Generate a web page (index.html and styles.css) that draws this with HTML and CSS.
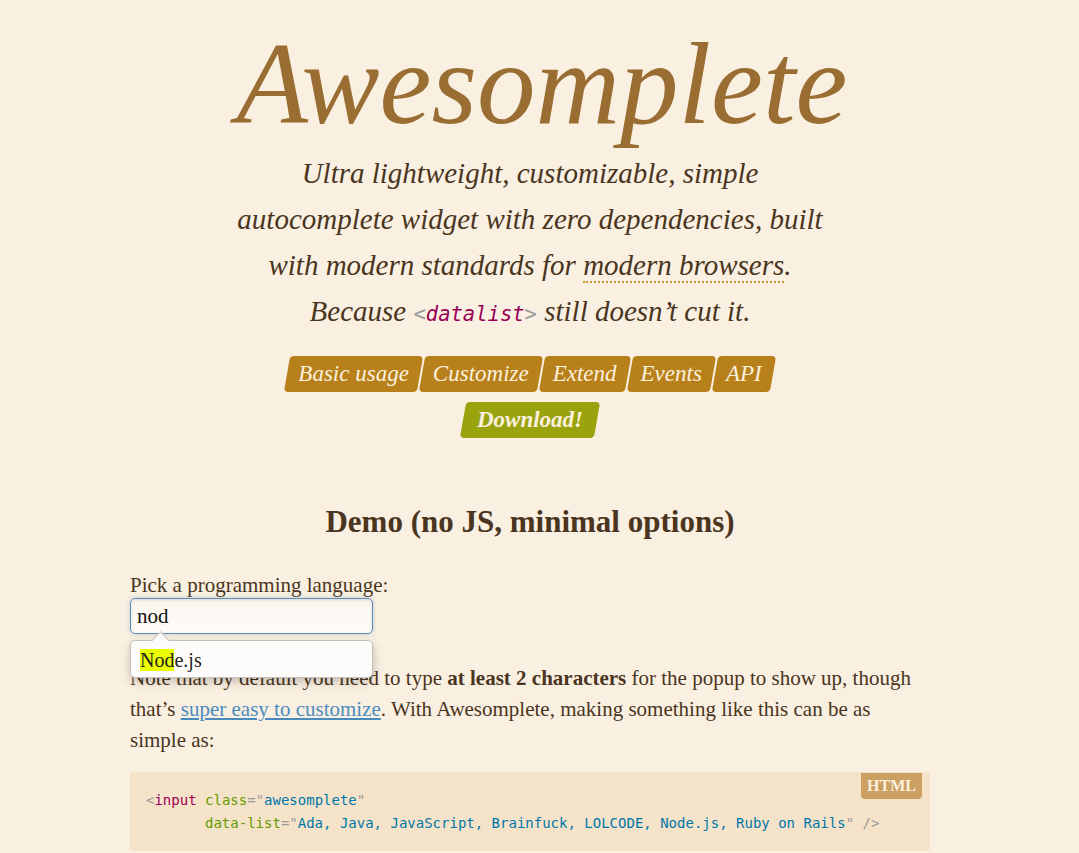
FILE: index.html
```html
<!DOCTYPE html>
<html>
<head>
<meta charset="utf-8">
<title>Awesomplete</title>
<link rel="stylesheet" href="styles.css">
</head>
<body>
<div class="page">
  <header class="hero">
    <h1 class="title">Awesomplete</h1>
    <p class="tagline">Ultra lightweight, customizable, simple<br>autocomplete widget with zero dependencies, built<br>with modern standards for <abbr class="dotted">modern browsers</abbr>.<br>Because <code class="tag"><span class="punct">&lt;</span>datalist<span class="punct">&gt;</span></code> still doesn’t cut it.</p>
    <nav class="nav">
      <div class="nav-row">
        <a class="btn">Basic usage</a><a class="btn">Customize</a><a class="btn">Extend</a><a class="btn">Events</a><a class="btn">API</a>
      </div>
      <div class="nav-row">
        <a class="btn btn-download">Download!</a>
      </div>
    </nav>
  </header>

  <section class="demo">
    <h2 class="demo-title">Demo (no JS, minimal options)</h2>
    <label class="field-label">Pick a programming language:</label>
    <div class="awesomplete">
      <div class="input">nod</div>
      <ul class="suggestions">
        <li><mark>Nod</mark>e.js</li>
      </ul>
    </div>
    <p class="text">Note that by default you need to type <strong>at least 2 characters</strong> for the popup to show up, though that’s <a class="link">super easy to customize</a>. With Awesomplete, making something like this can be as simple as:</p>
    <div class="code">
      <span class="lang">HTML</span>
<pre><span class="punct">&lt;</span><span class="t">input</span> <span class="a">class</span><span class="punct">=</span><span class="v"><span class="punct">"</span>awesomplete<span class="punct">"</span></span>
       <span class="a">data-list</span><span class="punct">=</span><span class="v"><span class="punct">"</span>Ada, Java, JavaScript, Brainfuck, LOLCODE, Node.js, Ruby on Rails<span class="punct">"</span></span> <span class="punct">/&gt;</span></pre>
    </div>
  </section>
</div>
</body>
</html>
```
FILE: styles.css
```css
html, body {
  margin: 0;
  padding: 0;
  background: #faf0e2;
}
body {
  padding-right: 19px;
  font-family: "Liberation Serif", "Times New Roman", serif;
  color: #4a3520;
}
.page {
  width: 800px;
  margin: 0 auto;
}
.hero {
  text-align: center;
  padding-top: 14px;
}
.title {
  margin: 0;
  padding-left: 24px;
  font-size: 117px;
  font-weight: normal;
  font-style: italic;
  color: #9a6e33;
  line-height: 140px;
}
.tagline {
  margin: -4px 0 0;
  font-size: 29px;
  font-style: italic;
  line-height: 46px;
  color: #4a3520;
}
.dotted {
  text-decoration: none;
  border-bottom: 2px dotted #c8962a;
}
.tag {
  font-family: "DejaVu Sans Mono", monospace;
  font-style: italic;
  font-size: 20.5px;
  color: #990055;
}
.punct { color: #999; font-style: normal; }
.nav {
  margin-top: 19px;
  display: flex;
  flex-direction: column;
  align-items: center;
  gap: 10px;
}
.nav-row {
  display: flex;
  justify-content: center;
}
.btn {
  position: relative;
  display: inline-block;
  padding: 0 11px;
  height: 36px;
  line-height: 36px;
  font-size: 23px;
  font-style: italic;
  color: #fbf1de;
  margin: 0 1px;
  z-index: 0;
}
.btn::before {
  content: "";
  position: absolute;
  inset: 0;
  background: #b8801a;
  border-radius: 4px;
  transform: skewX(-10deg);
  z-index: -1;
}
.btn-download {
  font-weight: bold;
  padding: 0 14px;
}
.btn-download::before {
  background: #99a30e;
}
.demo {
  margin-top: 64px;
  position: relative;
}
.demo-title {
  margin: 0 0 30px;
  text-align: center;
  font-size: 31px;
  line-height: 40px;
  font-weight: bold;
}
.field-label {
  display: block;
  font-size: 21px;
  line-height: 26px;
}
.awesomplete {
  position: relative;
  width: 243px;
}
.input {
  box-sizing: border-box;
  height: 36px;
  border: 1px solid #5e8fb6;
  border-radius: 5px;
  background: linear-gradient(#fbf5ee, #fdfbf8);
  box-shadow: inset 0 1px 3px rgba(0,0,0,0.12), 0 0 4px rgba(94,143,182,0.4);
  padding: 0 6px;
  font-size: 21px;
  line-height: 34px;
  color: #111;
}
.suggestions {
  position: absolute;
  left: 0;
  right: 0;
  top: 42px;
  margin: 0;
  padding: 0;
  list-style: none;
  background: #fefcfa;
  border: 1px solid #c4c0bb;
  border-radius: 5px;
  box-shadow: 0.05em 0.2em 0.6em rgba(0,0,0,0.2);
  z-index: 2;
}
.suggestions::before {
  content: "";
  position: absolute;
  top: -7px;
  left: 23px;
  width: 12px;
  height: 12px;
  background: #fefcfa;
  border: 1px solid #c4c0bb;
  border-right: 0;
  border-bottom: 0;
  transform: rotate(45deg);
}
.suggestions li {
  position: relative;
  padding: 0 9px;
  height: 36px;
  line-height: 38px;
  font-size: 20px;
  color: #222;
}
mark {
  background: #e9ff00;
  color: #222;
}
.text {
  margin: 29px 0 0;
  font-size: 21px;
  line-height: 31px;
}
.text strong { font-weight: bold; }
.link {
  color: #4a8bbd;
  text-decoration: underline;
}
.code {
  position: relative;
  margin-top: 16px;
  background: #f5e3c9;
  border-radius: 4px;
  padding: 17px 16px 16px;
}
.code pre {
  margin: 0;
  font-family: "DejaVu Sans Mono", monospace;
  font-size: 14px;
  line-height: 23px;
  color: #4a3520;
}
.code .t { color: #990055; }
.code .a { color: #669900; }
.code .v { color: #0077aa; }
.lang {
  position: absolute;
  top: 1px;
  right: 8px;
  background: #cc9f63;
  color: #fbf1de;
  font-weight: bold;
  font-size: 16px;
  line-height: 26px;
  padding: 0 6px;
  border-radius: 0 0 4px 4px;
}
```
